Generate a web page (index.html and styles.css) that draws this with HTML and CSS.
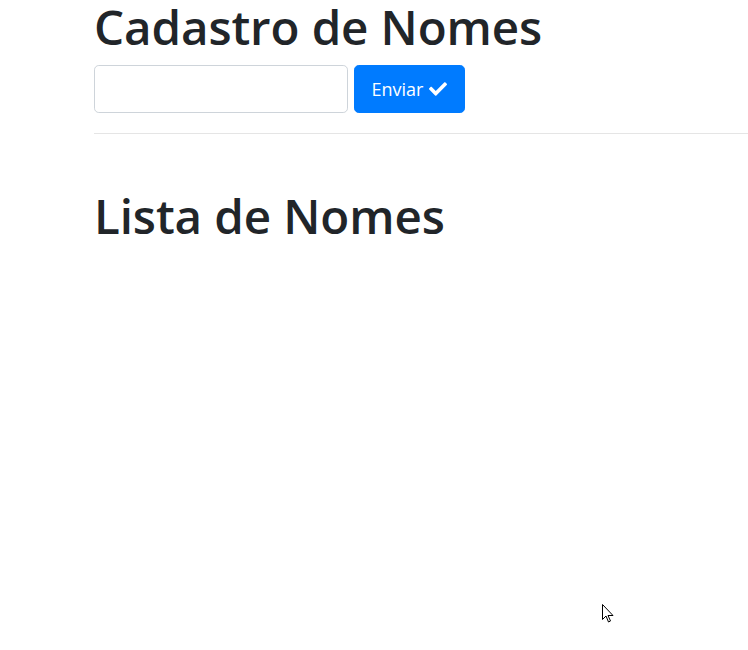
FILE: index.html
```html
<!DOCTYPE html>
<html lang="pt">
<head>
<meta charset="utf-8">
<title>Cadastro de Nomes</title>
<link rel="stylesheet" href="styles.css">
</head>
<body>
<main class="page">
  <h1 class="title">Cadastro de Nomes</h1>
  <form class="form-row" onsubmit="return false">
    <input class="name-input" type="text" aria-label="Nome">
    <button class="btn-send" type="submit">Enviar
      <svg class="check" viewBox="0 0 512 512" width="18" height="18" aria-hidden="true"><path fill="#fff" d="M173.9 439.4l-166.4-166.4c-10-10-10-26.2 0-36.2l36.2-36.2c10-10 26.2-10 36.2 0L192 312.7 432.1 72.6c10-10 26.2-10 36.2 0l36.2 36.2c10 10 10 26.2 0 36.2L210.1 439.4c-10 10-26.2 10-36.2 0z"/></svg>
    </button>
  </form>
  <hr class="divider">
  <h1 class="title list-title">Lista de Nomes</h1>
</main>
<svg class="cursor" width="12" height="20" viewBox="0 0 12 20" aria-hidden="true"><path d="M0.5 0.5 L0.5 15.5 L4 12 L6.5 18 L8.5 17 L6 11.5 L11 11.5 Z" fill="#fff" stroke="#000" stroke-width="1"/></svg>
</body>
</html>
```
FILE: styles.css
```css
html, body {
  margin: 0;
  padding: 0;
  background: #fff;
}
body {
  font-family: "Open Sans", "Noto Sans", sans-serif;
  color: #212529;
  width: 748px;
  height: 650px;
  overflow: hidden;
  position: relative;
}
.page {
  padding-left: 94px;
}
.title {
  margin: 0;
  font-weight: 600;
  font-size: 47.5px;
  line-height: 54px;
  letter-spacing: -0.1px;
}
.form-row {
  display: flex;
  gap: 6px;
  margin-top: 11px;
}
.name-input {
  box-sizing: border-box;
  width: 254px;
  height: 48px;
  border: 1px solid #ced4da;
  border-radius: 4.8px;
  padding: 8px 16px;
  font-size: 20px;
  font-family: inherit;
}
.btn-send {
  box-sizing: border-box;
  height: 48px;
  width: 111px;
  background: #007bff;
  border: 1px solid #007bff;
  border-radius: 4.8px;
  color: #fff;
  font-family: inherit;
  font-size: 18px;
  padding: 0 16px;
  display: flex;
  align-items: center;
  justify-content: center;
  gap: 6px;
}
.check {
  display: block;
}
.divider {
  margin: 20px 0 0 0;
  border: 0;
  border-top: 1px solid rgba(0,0,0,.1);
}
.list-title {
  margin-top: 55px;
}
.cursor {
  position: absolute;
  left: 602px;
  top: 604px;
}
```
